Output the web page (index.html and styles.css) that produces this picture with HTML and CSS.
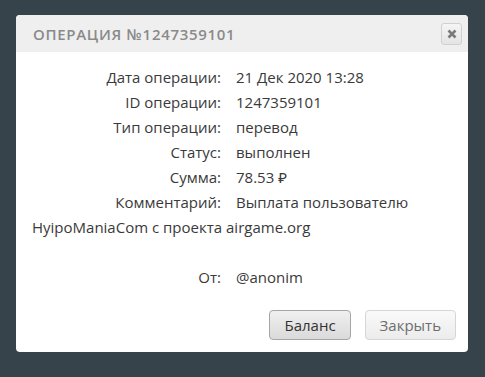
FILE: index.html
```html
<!DOCTYPE html>
<html lang="ru">
    <head>
        <meta charset="UTF-8">
        <title>Операция</title>
        <link rel="stylesheet" href="styles.css">
    </head>
    <body>
        <div class="dialog">
            <div class="dialog_head">
                <span class="dialog_title">Операция №1247359101</span>
                <button class="dialog_close" aria-label="Закрыть">
                    <svg width="10" height="10" viewBox="0 0 10 10">
                        <path d="M1.5 1.5 L8.5 8.5 M8.5 1.5 L1.5 8.5" stroke="#7a7a7a" stroke-width="2.6" stroke-linecap="butt"/>
                    </svg>
                </button>
            </div>
            <div class="dialog_body">
                <div class="row"><span class="row_label">Дата операции:</span>21 Дек 2020 13:28</div>
                <div class="row"><span class="row_label">ID операции:</span>1247359101</div>
                <div class="row"><span class="row_label">Тип операции:</span>перевод</div>
                <div class="row"><span class="row_label">Статус:</span>выполнен</div>
                <div class="row"><span class="row_label">Сумма:</span>78.53 ₽</div>
                <div class="row"><span class="row_label">Комментарий:</span>Выплата пользователю HyipoManiaCom с проекта airgame.org</div>
                <div class="row row-empty"></div>
                <div class="row"><span class="row_label">От:</span>@anonim</div>
            </div>
            <div class="dialog_foot">
                <button class="btn btn-main">Баланс</button>
                <button class="btn">Закрыть</button>
            </div>
        </div>
    </body>
</html>
```

FILE: styles.css
```css
* {
    box-sizing: border-box;
}

html,
body {
    margin: 0;
    height: 100%;
}

body {
    background-color: #36434a;
    font-family: "Open Sans", "Noto Sans", sans-serif;
    padding: 15px 17px 0 16px;
}

.dialog {
    width: 452px;
    background-color: #fff;
    border-radius: 4px;
    overflow: hidden;
}

.dialog_head {
    height: 37px;
    display: flex;
    align-items: center;
    justify-content: space-between;
    padding: 0 6px 0 17px;
    background-color: #efefef;
}

.dialog_title {
    font-size: 15px;
    font-weight: 600;
    letter-spacing: 0.7px;
    text-transform: uppercase;
    color: #8a8a8a;
}

.dialog_close {
    width: 21px;
    height: 22px;
    display: grid;
    place-items: center;
    padding: 0;
    background: linear-gradient(#f5f5f5, #e4e4e4);
    border: 1px solid #d0d0d0;
    border-radius: 3px;
}

.dialog_body {
    padding: 13px 16px 0;
    font-size: 15px;
    line-height: 25px;
    color: #3a3a3a;
}

.row-empty {
    height: 25px;
}

.row_label {
    display: inline-block;
    width: 189px;
    margin-right: 15px;
    text-align: right;
}

.dialog_foot {
    display: flex;
    justify-content: flex-end;
    gap: 14px;
    padding: 20px 12px 12px;
}

.btn {
    height: 30px;
    padding: 0 14px;
    font-family: "Open Sans", "DejaVu Sans", sans-serif;
    font-size: 15px;
    color: #6e6e6e;
    background: linear-gradient(#fafafa, #ececec);
    border: 1px solid #d6d6d6;
    border-radius: 4px;
}

.btn-main {
    color: #333;
    background: linear-gradient(#f0f0f0, #dadada);
    border-color: #a6a6a6;
}
```
